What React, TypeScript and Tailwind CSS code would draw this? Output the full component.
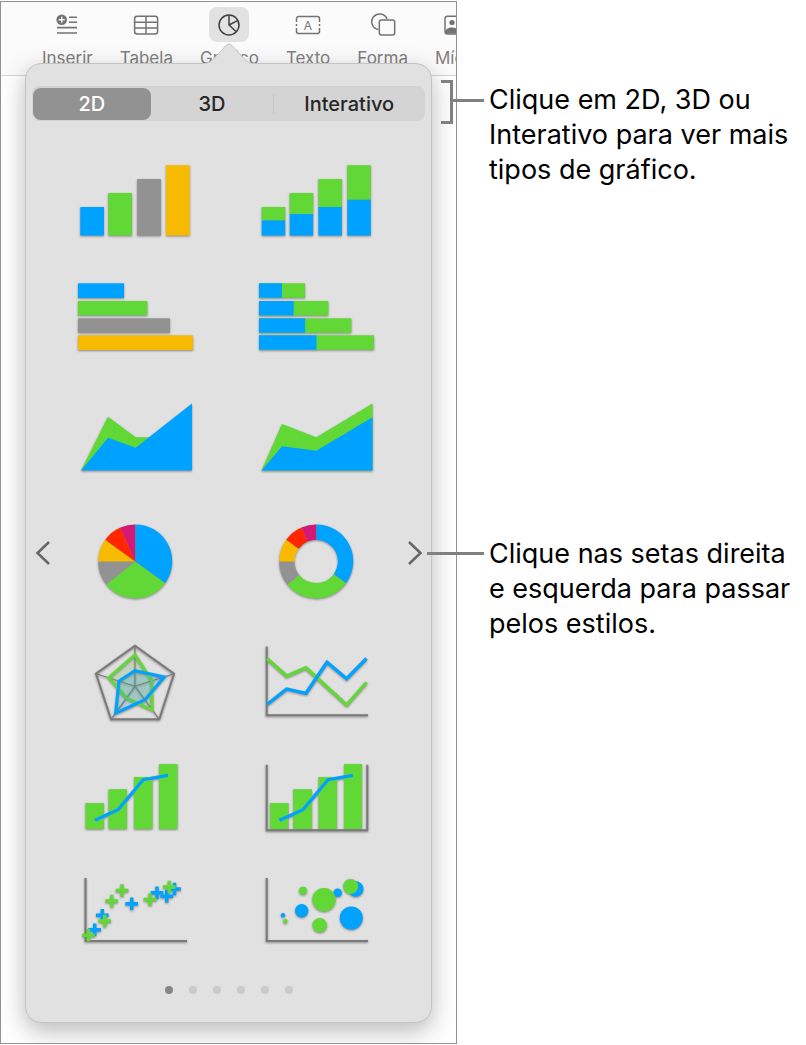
import { useState, type ReactNode } from "react";

const BLUE = "#00a2ff";
const GREEN = "#61d836";
const GRAY = "#929292";
const YELLOW = "#f8ba00";
const RED = "#ff2600";
const PINK = "#d41876";
const AXIS = "#7a7a7a";

function Chart({ children }: { children: ReactNode }) {
  return (
    <svg viewBox="0 0 182 118" className="w-[182px] h-[118px]" fill="none">
      <g className="drop-shadow-[0_1px_1px_rgba(0,0,0,0.4)]">{children}</g>
    </svg>
  );
}

function ColumnChart() {
  return (
    <Chart>
      <rect x="36.3" y="67" width="23.7" height="28.5" fill={BLUE} />
      <rect x="64.3" y="53" width="23.7" height="42.5" fill={GREEN} />
      <rect x="93.2" y="39" width="23.7" height="56.5" fill={GRAY} />
      <rect x="122" y="25.2" width="23.7" height="70.3" fill={YELLOW} />
    </Chart>
  );
}

function StackedColumnChart() {
  const bars = [
    { x: 36.7, top: 67, split: 80.5 },
    { x: 64.7, top: 53, split: 74 },
    { x: 93.4, top: 39, split: 67 },
    { x: 122.3, top: 25.2, split: 59.8 },
  ];
  return (
    <Chart>
      {bars.map((b) => (
        <g key={b.x}>
          <rect x={b.x} y={b.top} width="23.5" height={b.split - b.top} fill={GREEN} />
          <rect x={b.x} y={b.split} width="23.5" height={95.5 - b.split} fill={BLUE} />
        </g>
      ))}
    </Chart>
  );
}

function BarChart() {
  return (
    <Chart>
      <rect x="34" y="25.3" width="46" height="14.7" fill={BLUE} />
      <rect x="34" y="43" width="69.3" height="14.3" fill={GREEN} />
      <rect x="34" y="60.3" width="92" height="14.3" fill={GRAY} />
      <rect x="34" y="77.3" width="115" height="14.7" fill={YELLOW} />
    </Chart>
  );
}

function StackedBarChart() {
  const bars = [
    { y: 25.3, width: 46 },
    { y: 43, width: 69.3 },
    { y: 60.3, width: 92.3 },
    { y: 77.3, width: 115 },
  ];
  return (
    <Chart>
      {bars.map((b) => (
        <g key={b.y}>
          <rect x="34" y={b.y} width={b.width} height="14.5" fill={GREEN} />
          <rect x="34" y={b.y} width={b.width / 2} height="14.5" fill={BLUE} />
        </g>
      ))}
    </Chart>
  );
}

function AreaChart() {
  return (
    <Chart>
      <path d="M37 94.5 64 40.7 91.7 61.3H110L105 90Z" fill={GREEN} />
      <path d="M37 94.5 64 61.7 91.7 71.7 148 27.5V94.5Z" fill={BLUE} />
    </Chart>
  );
}

function StackedAreaChart() {
  return (
    <Chart>
      <path d="M36.5 94.5 57 48 91.3 61.3 147.5 27.5V94.5Z" fill={GREEN} />
      <path d="M36.5 94.5 57 70.3 91.3 74.7 147.5 41.2V94.5Z" fill={BLUE} />
    </Chart>
  );
}

const slices = [
  { from: 0, to: 0.35, color: BLUE },
  { from: 0.35, to: 0.643, color: GREEN },
  { from: 0.643, to: 0.75, color: GRAY },
  { from: 0.75, to: 0.85, color: YELLOW },
  { from: 0.85, to: 0.935, color: RED },
  { from: 0.935, to: 1, color: PINK },
];

function slicePath(from: number, to: number, inner: number) {
  const outer = 37;
  const point = (t: number, r: number) =>
    `${91.2 + r * Math.sin(t * 2 * Math.PI)} ${67.4 - r * Math.cos(t * 2 * Math.PI)}`;
  return `M${point(from, inner)}L${point(from, outer)}A${outer} ${outer} 0 0 1 ${point(to, outer)}L${point(to, inner)}A${inner} ${inner} 0 0 0 ${point(from, inner)}Z`;
}

function PieChart({ inner }: { inner: number }) {
  return (
    <Chart>
      {slices.map((s) => (
        <path key={s.color} d={slicePath(s.from, s.to, inner)} fill={s.color} />
      ))}
    </Chart>
  );
}

function RadarChart() {
  return (
    <Chart>
      <path d="M91 33.7 130 61.7 115.3 107.3H67L52 61.7Z" stroke={AXIS} strokeWidth="2" />
      <path
        d="M91 74.3V33.7M91 74.3 130 61.7M91 74.3 115.3 107.3M91 74.3 67 107.3M91 74.3 52 61.7"
        stroke={AXIS}
        strokeWidth="1.2"
      />
      <path d="M91 42.7 107.7 68.7 108 98 82.3 86 65 65.7Z" fill={GREEN} fillOpacity="0.14" stroke={GREEN} strokeWidth="3" />
      <path d="M91 58.7 120.3 65 101 87.7 71.7 101 75 69Z" fill={BLUE} fillOpacity="0.14" stroke={BLUE} strokeWidth="3" />
    </Chart>
  );
}

function LineChart() {
  return (
    <Chart>
      <path d="M41.7 34.5V103.3H143" stroke={AXIS} strokeWidth="2" />
      <path d="M42 46.5 61.7 64 81 55.7 121.7 93 141.5 70.5" stroke={GREEN} strokeWidth="3.3" />
      <path d="M42 92.5 61.7 77 81 81.3 102 50.3 121.7 66.7 141.5 46.5" stroke={BLUE} strokeWidth="3.3" />
    </Chart>
  );
}

function ComboChart() {
  return (
    <Chart>
      <path d="M41.5 73H60V99H41.5ZM64.5 59.3H83V99H64.5ZM90 47H108.5V99H90ZM115 34H133.5V99H115Z" fill={GREEN} />
      <path d="M51 90.3 74 79.7 99.3 49.7 124 45.3" stroke={BLUE} strokeWidth="3.3" />
    </Chart>
  );
}

function TwoAxisChart() {
  return (
    <Chart>
      <path d="M45 73H63.5V99H45ZM68.3 59.3H87V99H68.3ZM93.5 47H112V99H93.5ZM119 34H137V99H119Z" fill={GREEN} />
      <path d="M41.7 34.7V100.3H142.3V34.7" stroke={AXIS} strokeWidth="2" />
      <path d="M54.5 90.3 78 79.7 103 49.7 128 45.3" stroke={BLUE} strokeWidth="3.3" />
    </Chart>
  );
}

function ScatterChart() {
  const points = [
    { x: 58.3, y: 67.3, color: BLUE },
    { x: 50.7, y: 81.7, color: BLUE },
    { x: 87.7, y: 55.7, color: BLUE },
    { x: 113, y: 44.7, color: BLUE },
    { x: 122.7, y: 48.3, color: BLUE },
    { x: 130.5, y: 41, color: BLUE },
    { x: 44.5, y: 87.3, color: GREEN },
    { x: 60.7, y: 73, color: GREEN },
    { x: 67.7, y: 53, color: GREEN },
    { x: 78, y: 42.5, color: GREEN },
    { x: 106, y: 51.5, color: GREEN },
    { x: 125.3, y: 39, color: GREEN },
  ];
  return (
    <Chart>
      <path d="M41.5 30V93H143" stroke={AXIS} strokeWidth="2" />
      {points.map((p) => (
        <path key={p.x} d={`M${p.x - 6.3} ${p.y}h12.6M${p.x} ${p.y - 6.3}v12.6`} stroke={p.color} strokeWidth="3.4" />
      ))}
    </Chart>
  );
}

function BubbleChart() {
  return (
    <Chart>
      <path d="M41.7 30V93H143" stroke={AXIS} strokeWidth="2" />
      <g fill={BLUE}>
        <circle cx="58" cy="67.3" r="2.2" />
        <circle cx="76.7" cy="62.7" r="6.7" />
        <circle cx="112.7" cy="44.7" r="4.3" />
        <circle cx="130.7" cy="41" r="7.8" />
        <circle cx="126.3" cy="70" r="11.5" />
      </g>
      <g fill={GREEN}>
        <circle cx="78" cy="42.7" r="4" />
        <circle cx="99" cy="51.7" r="11.7" />
        <circle cx="125.7" cy="38.5" r="7.5" />
        <circle cx="94.7" cy="77.3" r="7.3" />
        <circle cx="60.3" cy="73.3" r="2.2" />
      </g>
    </Chart>
  );
}

const charts = [
  { name: "Colunas", chart: <ColumnChart /> },
  { name: "Colunas empilhadas", chart: <StackedColumnChart /> },
  { name: "Barras", chart: <BarChart /> },
  { name: "Barras empilhadas", chart: <StackedBarChart /> },
  { name: "Área", chart: <AreaChart /> },
  { name: "Área empilhada", chart: <StackedAreaChart /> },
  { name: "Pizza", chart: <PieChart inner={0} /> },
  { name: "Rosca", chart: <PieChart inner={21.7} /> },
  { name: "Radar", chart: <RadarChart /> },
  { name: "Linhas", chart: <LineChart /> },
  { name: "Misto", chart: <ComboChart /> },
  { name: "Dois eixos", chart: <TwoAxisChart /> },
  { name: "Dispersão", chart: <ScatterChart /> },
  { name: "Bolhas", chart: <BubbleChart /> },
];

function ToolIcon({ children }: { children: ReactNode }) {
  return (
    <svg viewBox="0 0 28 24" className="w-7 h-6" fill="none" stroke="currentColor" strokeWidth="1.5">
      {children}
    </svg>
  );
}

const tools = [
  {
    label: "Inserir",
    icon: (
      <ToolIcon>
        <circle cx="8.7" cy="6.8" r="5.3" fill="currentColor" stroke="none" />
        <path d="M5.7 6.8h6M8.7 3.8v6" stroke="#fafafa" strokeWidth="1.4" />
        <path d="M16 4.3h8M16 9.3h8M4 14.6h20M4 20h20" strokeWidth="1.6" />
      </ToolIcon>
    ),
  },
  {
    label: "Tabela",
    icon: (
      <ToolIcon>
        <rect x="2.6" y="3.3" width="23" height="17.6" rx="2.5" />
        <path d="M2.6 9.3h23M2.6 15h23M14 3.3v17.6" />
      </ToolIcon>
    ),
  },
  {
    label: "Gráfico",
    active: true,
    icon: (
      <ToolIcon>
        <circle cx="14" cy="12" r="10" />
        <path d="M14 2v10l7.3 6.8M14 12l9-4.6" />
      </ToolIcon>
    ),
  },
  {
    label: "Texto",
    icon: (
      <ToolIcon>
        <path d="M2.5 9V5.5a2 2 0 0 1 2-2h19a2 2 0 0 1 2 2V9M2.5 15v3.5a2 2 0 0 0 2 2h19a2 2 0 0 0 2-2V15M2.5 11v2M25.5 11v2" />
        <text x="14" y="16.5" textAnchor="middle" fontSize="12" fill="currentColor" stroke="none">
          A
        </text>
      </ToolIcon>
    ),
  },
  {
    label: "Forma",
    icon: (
      <ToolIcon>
        <path d="M9.3 16.6A7.9 7.9 0 1 1 18 6" />
        <rect x="10.3" y="7" width="15.4" height="15" rx="2.2" />
      </ToolIcon>
    ),
  },
  {
    label: "Mídia",
    icon: (
      <ToolIcon>
        <rect x="2" y="3.3" width="23" height="17.6" rx="2.5" />
        <circle cx="9" cy="9.5" r="2.6" fill="currentColor" stroke="none" />
        <path d="M2 20.5c0-4 3-6 7-6s8 3 16 0v6Z" fill="currentColor" stroke="none" />
      </ToolIcon>
    ),
  },
];

const tabs = [
  { label: "2D", size: "flex-[118]" },
  { label: "3D", size: "flex-[124]" },
  { label: "Interativo", size: "flex-[150]" },
];

export default function App() {
  const [tab, setTab] = useState("2D");
  const [page, setPage] = useState(0);

  return (
    <div className="flex items-start bg-white pt-px font-[Inter,'Liberation_Sans',sans-serif] text-black">
      {/* App window */}
      <div className="flex-1 min-w-0 overflow-hidden border border-[#929292] bg-white">
        <div className="flex items-start gap-[27px] h-[74px] border-b border-[#d6d6d6] bg-[#fbfbfb] pl-[41px] pt-[5px]">
          {tools.map((tool) => (
            <button
              key={tool.label}
              type="button"
              className={
                tool.active
                  ? "flex flex-col items-center shrink-0 text-[#404040]"
                  : "flex flex-col items-center shrink-0 text-[#737373]"
              }
            >
              <span
                className={
                  tool.active
                    ? "flex items-center justify-center w-10 h-[35px] rounded-lg bg-[#e2e2e2]"
                    : "flex items-center justify-center w-10 h-[35px]"
                }
              >
                {tool.icon}
              </span>
              <span className="mt-1 text-[17px] leading-6 text-[#808080]">{tool.label}</span>
            </button>
          ))}
        </div>

        {/* Chart popover */}
        <div className="relative -mt-[13px] ml-6 mr-6 mb-5 rounded-2xl border border-[#c4c4c4] bg-[#e1e1e1] pt-[22px] pb-7 shadow-[0_8px_24px_rgba(0,0,0,0.28)]">
          <svg
            viewBox="0 0 52 22"
            className="absolute -top-[21px] left-1/2 -translate-x-1/2 w-[52px] h-[22px]"
            fill="none"
          >
            <path d="M0 22v-1.5c5 0 8-1.5 11-5L23 2.5q3-3 6 0L41 15.5c3 3.5 6 5 11 5V22Z" fill="#e1e1e1" />
            <path d="M0 20.5c5 0 8-1.5 11-5L23 2.5q3-3 6 0L41 15.5c3 3.5 6 5 11 5" stroke="#c4c4c4" />
          </svg>

          <div className="flex items-center h-[35px] mx-1.5 rounded-lg bg-[#d4d4d4] p-px">
            {tabs.map((t) => (
              <div key={t.label} className={`flex items-center ${t.size}`}>
                <button
                  type="button"
                  onClick={() => setTab(t.label)}
                  className={
                    t.label === tab
                      ? "flex-1 h-8 rounded-lg bg-[#929292] text-xl font-medium text-white"
                      : "flex-1 h-8 text-xl font-medium text-[#262626]"
                  }
                >
                  {t.label}
                </button>
                {t.label === "3D" && <span className="w-px h-5 bg-[#c6c6c6]" />}
              </div>
            ))}
          </div>

          <div className="flex items-center mt-[19px]">
            <button
              type="button"
              aria-label="Anterior"
              onClick={() => setPage(Math.max(page - 1, 0))}
              className="relative w-6 -mr-1.5"
            >
              <svg viewBox="0 0 24 28" className="w-6 h-7" fill="none" stroke="#666666" strokeWidth="2.5">
                <path d="M23 3 11.5 14 23 25" />
              </svg>
            </button>
            <div className="grid grid-cols-2 flex-1 justify-items-center">
              {charts.map((c) => (
                <button key={c.name} type="button" aria-label={c.name}>
                  {c.chart}
                </button>
              ))}
            </div>
            <button
              type="button"
              aria-label="Próximo"
              onClick={() => setPage(Math.min(page + 1, 5))}
              className="w-6"
            >
              <svg viewBox="0 0 24 28" className="w-6 h-7" fill="none" stroke="#666666" strokeWidth="2.5">
                <path d="M2 3 13.500 14 2 25" />
              </svg>
            </button>
          </div>

          <div className="flex justify-center gap-4 mt-5">
            {[0, 1, 2, 3, 4, 5].map((i) => (
              <button
                key={i}
                type="button"
                aria-label={`Página ${i + 1}`}
                onClick={() => setPage(i)}
                className={i === page ? "size-2 rounded-full bg-[#868686]" : "size-2 rounded-full bg-[#c9c9c9]"}
              />
            ))}
          </div>
        </div>
      </div>

      {/* Callouts */}
      <div className="w-[349px] shrink-0 pt-[81px] pl-8 text-[27px] leading-[35px]">
        <div className="relative">
          <span className="absolute -left-12 -top-0.5 w-3 h-11 border-[3px] border-l-0 border-[#808080]" />
          <span className="absolute -left-9 top-[17px] w-[31px] h-[3px] bg-[#808080]" />
          <p>
            Clique em 2D, 3D ou
            <br />
            Interativo para ver mais
            <br />
            tipos de gráfico.
          </p>
        </div>
        <div className="relative mt-[349px]">
          <span className="absolute -left-[62px] top-4 w-[57px] h-[3px] bg-[#808080]" />
          <p>
            Clique nas setas direita
            <br />
            e esquerda para passar
            <br />
            pelos estilos.
          </p>
        </div>
      </div>
    </div>
  );
}
